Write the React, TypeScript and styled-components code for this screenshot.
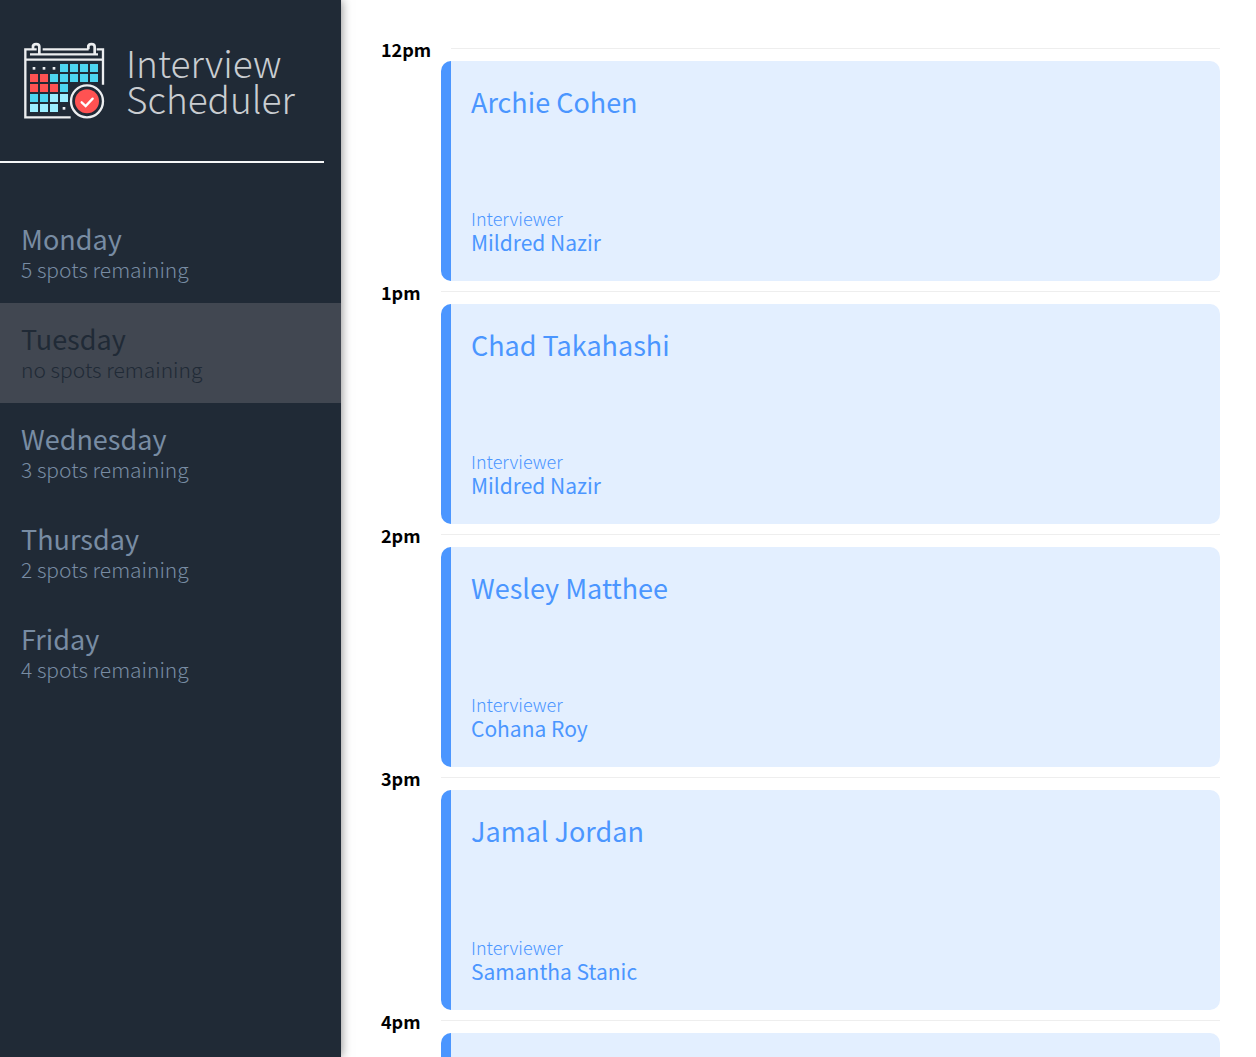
import React, { useState } from "react";
import styled, { createGlobalStyle } from "styled-components";

const GlobalStyle = createGlobalStyle`
  *, *::before, *::after { box-sizing: border-box; }
  body {
    margin: 0;
    background: #fff;
    color: #000;
    font-family: "Noto Sans CJK JP", "Noto Sans", sans-serif;
  }
`;

const Layout = styled.main`
  display: flex;
  height: 100vh;
`;

const Sidebar = styled.aside`
  flex: 0 0 341px;
  display: flex;
  flex-direction: column;
  background: #202a36;
  box-shadow: 0 0 10px rgba(0, 0, 0, 0.5);
  z-index: 1;
`;

const Brand = styled.header`
  display: flex;
  align-items: center;
  gap: 21px;
  height: 161px;
  padding: 0 23px;
`;

const BrandIcon = styled.svg`
  flex: none;
  width: 82px;
  height: 78px;
`;

const BrandName = styled.h1`
  margin: 0;
  padding-bottom: 2px;
  color: #c9cdd1;
  font-size: 37px;
  font-weight: 200;
  line-height: 36px;
`;

const Separator = styled.hr`
  width: 95%;
  height: 2px;
  margin: 0 0 40px;
  border: 0;
  background: #f5f6f7;
`;

const DayList = styled.ul`
  margin: 0;
  padding: 0;
  list-style: none;
`;

const DayButton = styled.button<{ $full: boolean }>`
  display: flex;
  flex-direction: column;
  justify-content: center;
  width: 100%;
  height: 100px;
  padding: 0 21px;
  border: 0;
  background: ${(p) => (p.$full ? "#414751" : "transparent")};
  color: ${(p) => (p.$full ? "#202a36" : "#788ca3")};
  font-family: inherit;
  text-align: left;
  cursor: pointer;
`;

const DayName = styled.span`
  font-size: 27px;
  font-weight: 400;
  line-height: 32px;
`;

const DaySpots = styled.span`
  font-size: 21px;
  font-weight: 300;
  line-height: 28px;
`;

const Schedule = styled.section`
  flex: 1;
  min-width: 0;
  padding: 38px 36px 38px 40px;
  overflow-y: auto;
  scrollbar-width: none;
`;

const HourHeader = styled.header`
  display: flex;
  gap: 20px;
  height: 23px;
`;

const HourLabel = styled.h4`
  margin: 0;
  font-size: 18px;
  font-weight: 700;
  line-height: 22px;
`;

const HourRule = styled.hr`
  flex: 1;
  height: 1px;
  margin: 10px 0 0;
  border: 0;
  background: #eee;
`;

const Card = styled.section`
  display: flex;
  flex-direction: column;
  justify-content: space-between;
  height: 220px;
  margin-left: 60px;
  padding: 23px 20px 27px;
  border-left: 10px solid #4b96ff;
  border-radius: 10px;
  background: #e3efff;
  color: #4b96ff;
`;

const Student = styled.h2`
  margin: 0;
  font-size: 27px;
  font-weight: 400;
  line-height: 36px;
`;

const InterviewerLabel = styled.h4`
  margin: 0;
  font-size: 18px;
  font-weight: 300;
  line-height: 24px;
`;

const InterviewerName = styled.h3`
  margin: 0;
  font-size: 21px;
  font-weight: 400;
  line-height: 24px;
`;

const days = [
  { name: "Monday", spots: 5 },
  { name: "Tuesday", spots: 0 },
  { name: "Wednesday", spots: 3 },
  { name: "Thursday", spots: 2 },
  { name: "Friday", spots: 4 },
];

const appointments = [
  { time: "12pm", student: "Archie Cohen", interviewer: "Mildred Nazir" },
  { time: "1pm", student: "Chad Takahashi", interviewer: "Mildred Nazir" },
  { time: "2pm", student: "Wesley Matthee", interviewer: "Cohana Roy" },
  { time: "3pm", student: "Jamal Jordan", interviewer: "Samantha Stanic" },
  { time: "4pm", student: "", interviewer: "" },
];

// Each character is one cell of the calendar: b blue, r red, l light blue, d dot.
const calendar = ["dddbbbb", "rrbbbbb", "rrrb", "bbll", "llld"];
const cellColors: Record<string, string> = { b: "#4dd5f0", r: "#ff5252", l: "#9ceeff" };

function CalendarIcon() {
  return (
    <BrandIcon viewBox="39 36 246 234" aria-hidden="true">
      <g fill="none" stroke="#eceef0" strokeWidth="7">
        <path d="M182 262H46V58H80M98 58H236M260 58H279V164M46 89H279M60 73H264" />
        <path d="M69 50C69 40 88 40 88 50V72M235 50C235 40 254 40 254 50V72M69 46V58M235 46V58" strokeWidth="8" />
      </g>
      {calendar.map((row, y) =>
        [...row].map((cell, x) =>
          cell === "d" ? (
            <rect key={`${x}-${y}`} x={68 + x * 30} y={111 + y * 30} width="8" height="8" fill="#eceef0" />
          ) : (
            <rect key={`${x}-${y}`} x={60 + x * 30} y={102 + y * 30} width="24" height="24" fill={cellColors[cell]} />
          )
        )
      )}
      <circle cx="231" cy="214" r="48" fill="#202a36" stroke="#eceef0" strokeWidth="7" />
      <circle cx="231" cy="214" r="36" fill="#ff5252" />
      <path d="M215 217L227 228L248 206" fill="none" stroke="#fff" strokeWidth="7" strokeLinecap="round" />
    </BrandIcon>
  );
}

function spotsText(spots: number) {
  if (spots === 0) return "no spots remaining";
  return `${spots} ${spots === 1 ? "spot" : "spots"} remaining`;
}

export default function App() {
  const [, setDay] = useState("Tuesday");

  return (
    <Layout>
      <GlobalStyle />
      <Sidebar>
        <Brand>
          <CalendarIcon />
          <BrandName>
            Interview
            <br />
            Scheduler
          </BrandName>
        </Brand>
        <Separator />
        <nav>
          <DayList>
            {days.map((day) => (
              <li key={day.name}>
                <DayButton type="button" $full={day.spots === 0} onClick={() => setDay(day.name)}>
                  <DayName>{day.name}</DayName>
                  <DaySpots>{spotsText(day.spots)}</DaySpots>
                </DayButton>
              </li>
            ))}
          </DayList>
        </nav>
      </Sidebar>
      <Schedule>
        {appointments.map((item) => (
          <article key={item.time}>
            <HourHeader>
              <HourLabel>{item.time}</HourLabel>
              <HourRule />
            </HourHeader>
            <Card>
              {item.student && (
                <>
                  <Student>{item.student}</Student>
                  <div>
                    <InterviewerLabel>Interviewer</InterviewerLabel>
                    <InterviewerName>{item.interviewer}</InterviewerName>
                  </div>
                </>
              )}
            </Card>
          </article>
        ))}
      </Schedule>
    </Layout>
  );
}
